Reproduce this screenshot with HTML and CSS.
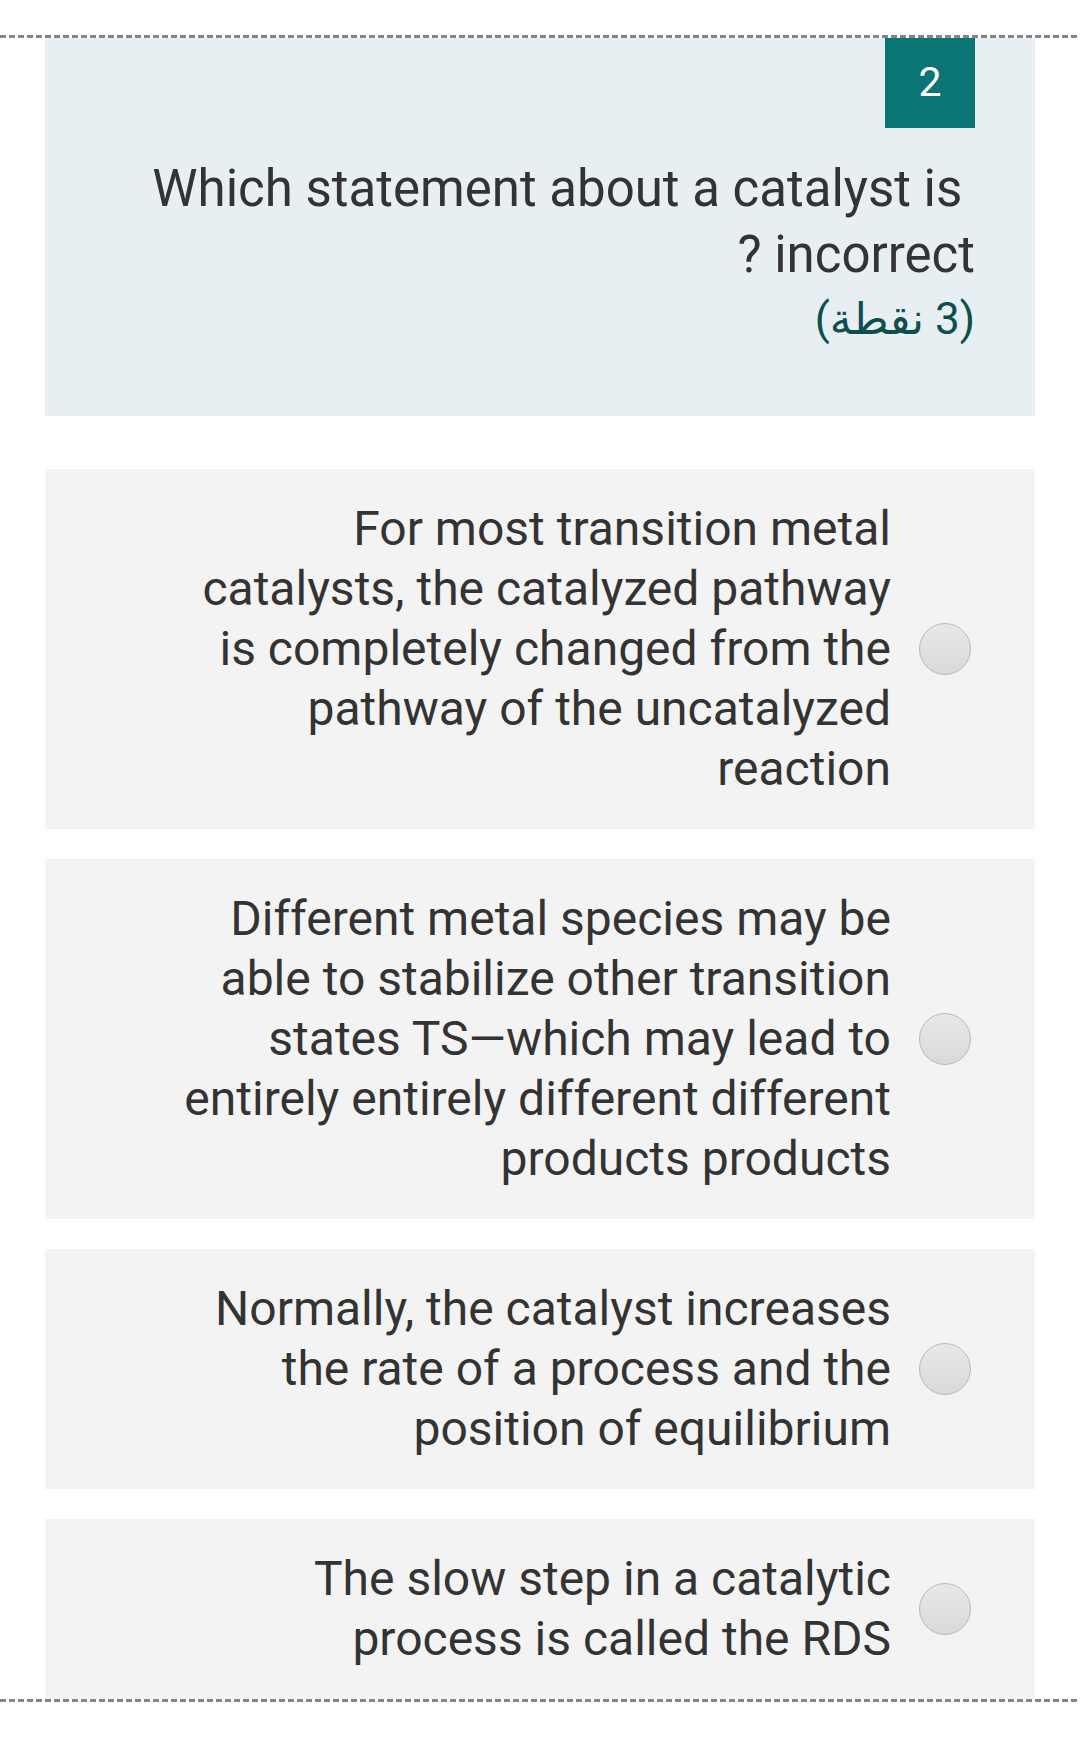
FILE: index.html
```html
<!DOCTYPE html>
<html lang="en">
<head>
<meta charset="utf-8">
<title>Question 2</title>
<link rel="stylesheet" href="styles.css">
</head>
<body>
<div class="page">
  <div class="dash"></div>
  <section class="question">
    <div class="badge">2</div>
    <p class="q-text">Which statement about a catalyst is&nbsp;<br>? incorrect</p>
    <p class="points" dir="rtl">(3 نقطة)</p>
  </section>

  <div class="options">
    <label class="option">
      <span class="opt-text">For most transition metal catalysts, the catalyzed pathway is completely changed from the pathway of the uncatalyzed reaction</span>
      <span class="radio"></span>
    </label>
    <label class="option">
      <span class="opt-text">Different metal species may be able to stabilize other transition states TS—which may lead to entirely entirely different different products products</span>
      <span class="radio"></span>
    </label>
    <label class="option">
      <span class="opt-text">Normally, the catalyst increases the rate of a process and the position of equilibrium</span>
      <span class="radio"></span>
    </label>
    <label class="option">
      <span class="opt-text">The slow step in a catalytic process is called the RDS</span>
      <span class="radio"></span>
    </label>
  </div>
  <div class="dash"></div>
</div>
</body>
</html>
```

FILE: styles.css
```css
html, body {
  margin: 0;
  padding: 0;
  background: #ffffff;
}

body {
  font-family: Roboto, "DejaVu Sans", sans-serif;
  color: #333333;
}

.page {
  padding-top: 35px;
  width: 1080px;
}

.dash {
  height: 3px;
  background: repeating-linear-gradient(to right, #858585 0 6px, transparent 6px 9px);
}

.question {
  margin: 0 45px;
  height: 378px;
  box-sizing: border-box;
  background: #e7eff2;
  padding: 0 60px 0 0;
  display: flex;
  flex-direction: column;
  align-items: flex-end;
}

.badge {
  width: 90px;
  height: 90px;
  background: #0b7575;
  color: #ffffff;
  font-size: 41px;
  display: flex;
  align-items: center;
  justify-content: center;
  padding-bottom: 3px;
  box-sizing: border-box;
}

.q-text {
  margin: 28px 0 0;
  font-size: 51px;
  line-height: 66px;
  text-align: right;
  color: #333333;
}

.points {
  margin: 0;
  font-size: 44px;
  line-height: 62px;
  color: #0d4f4f;
  text-align: right;
}

.options {
  display: flex;
  flex-direction: column;
  gap: 30px;
  margin: 53px 45px 0;
}

.option {
  display: flex;
  align-items: center;
  justify-content: flex-end;
  gap: 28px;
  background: #f3f3f3;
  padding: 30px 64px 30px 40px;
}

.opt-text {
  max-width: 715px;
  font-size: 48px;
  line-height: 60px;
  text-align: right;
  color: #333333;
}

.radio {
  flex: 0 0 auto;
  width: 50px;
  height: 50px;
  border-radius: 50%;
  border: 1px solid #b9b9b9;
  background: linear-gradient(#e8e8e8, #d9d9d9);
}
```
